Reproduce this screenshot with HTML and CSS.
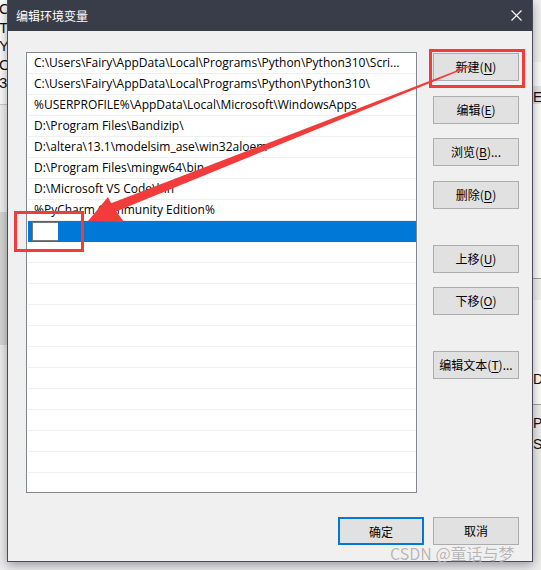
FILE: index.html
```html
<!DOCTYPE html>
<html lang="zh-CN">
<head>
<meta charset="utf-8">
<title>编辑环境变量</title>
<link rel="stylesheet" href="styles.css">
</head>
<body>
<div class="desk">
  <div class="side side-left">
    <div class="side-text">C:<br>TE<br>YE<br>O<br>3</div>
  </div>
  <div class="dialog">
    <div class="titlebar">
      <span class="title">编辑环境变量</span>
      <svg class="close" width="11" height="11" viewBox="0 0 11 11"><path d="M0.5 0.5L10.5 10.5M10.5 0.5L0.5 10.5" stroke="#fff" stroke-width="1.1" fill="none"/></svg>
    </div>
    <div class="content">
      <div class="main">
        <div class="list">
          <div class="row">C:\Users\Fairy\AppData\Local\Programs\Python\Python310\Scri...</div>
          <div class="row">C:\Users\Fairy\AppData\Local\Programs\Python\Python310\</div>
          <div class="row">%USERPROFILE%\AppData\Local\Microsoft\WindowsApps</div>
          <div class="row">D:\Program Files\Bandizip\</div>
          <div class="row">D:\altera\13.1\modelsim_ase\win32aloem</div>
          <div class="row">D:\Program Files\mingw64\bin</div>
          <div class="row">D:\Microsoft VS Code\bin</div>
          <div class="row">%PyCharm Community Edition%</div>
          <div class="row row-selected"><span class="editbox"></span></div>
          <div class="row"></div>
          <div class="row"></div>
          <div class="row"></div>
          <div class="row"></div>
          <div class="row"></div>
          <div class="row"></div>
          <div class="row"></div>
          <div class="row"></div>
          <div class="row"></div>
          <div class="row"></div>
          <div class="row"></div>
          <div class="row"></div>
        </div>
        <div class="actions">
          <button class="btn">新建(<u>N</u>)</button>
          <button class="btn gap-15">编辑(<u>E</u>)</button>
          <button class="btn gap-14">浏览(<u>B</u>)...</button>
          <button class="btn gap-15">删除(<u>D</u>)</button>
          <button class="btn gap-36">上移(<u>U</u>)</button>
          <button class="btn gap-14">下移(<u>O</u>)</button>
          <button class="btn gap-36">编辑文本(<u>T</u>)...</button>
        </div>
      </div>
      <div class="footer">
        <button class="btn btn-default">确定</button>
        <button class="btn">取消</button>
      </div>
    </div>
  </div>
  <div class="side side-right">
    <div class="right-text"><span class="r1">Ec</span><span class="r2">D</span><span class="r3">P</span><span class="r4">S</span></div>
  </div>
</div>
<svg class="annot" width="541" height="570" viewBox="0 0 541 570">
  <rect x="430.5" y="50.5" width="93" height="36" fill="none" stroke="#f23b3b" stroke-width="3"/>
  <rect x="15.5" y="212.5" width="67" height="38" fill="none" stroke="#f23b3b" stroke-width="3"/>
  <polygon points="470.3,66.6 469.7,65.4 110.5,203.6 113.5,212.4" fill="#f23b3b"/>
  <polygon points="88,221 108,197 113,207 124,222" fill="#f23b3b"/>
</svg>
<div class="watermark">CSDN @童话与梦</div>
</body>
</html>
```
FILE: styles.css
```css
html, body {
  margin: 0;
  padding: 0;
}
body {
  width: 541px;
  height: 570px;
  overflow: hidden;
  position: relative;
  font-family: "Open Sans", "Noto Sans CJK SC", sans-serif;
}
.desk {
  display: flex;
  height: 570px;
  background: #ebebeb;
}
.side {
  overflow: hidden;
  flex: none;
}
.side-left {
  width: 7px;
  background: linear-gradient(#fbfbfb 0 104px, #c9c9c9 104px 105px, #f0f0f0 105px 212px, #d6d6d6 212px 345px, #ececec 345px);
}
.side-text {
  font-family: "Liberation Sans", sans-serif;
  font-size: 15px;
  line-height: 18.5px;
  color: #111;
  margin-left: -1px;
  padding-top: 0;
  white-space: nowrap;
}
.side-right {
  width: 8px;
  background: linear-gradient(#f0f0f0 0 62px, #fafafa 62px 86px, #e3e3e3 86px 104px, #fbfbfb 104px 278px, #a0a0a0 278px 279px, #f0f0f0 279px 300px, #fbfbfb 300px 404px, #a0a0a0 404px 405px, #ececec 405px);
}
.right-text {
  display: flex;
  flex-direction: column;
  padding-top: 88px;
  font-family: "Liberation Sans", sans-serif;
  font-size: 14px;
  line-height: 18px;
  color: #111;
  white-space: nowrap;
}
.r2 { margin-top: 264px; }
.r3 { margin-top: 26px; }
.r4 { margin-top: 3px; }
.dialog {
  width: 526px;
  height: 562px;
  flex: none;
  box-sizing: border-box;
  border: 1px solid #4a4a58;
  border-top: none;
  background: #f0f0f0;
  box-shadow: 0 3px 10px rgba(0, 0, 0, 0.35);
  display: flex;
  flex-direction: column;
  position: relative;
  z-index: 1;
}
.titlebar {
  height: 31px;
  flex: none;
  background: #393c49;
  display: flex;
  align-items: center;
  justify-content: space-between;
  padding: 0 10px 0 8px;
  color: #fff;
  font-family: "Noto Sans CJK SC", sans-serif;
  font-size: 12px;
}
.close {
  display: block;
}
.content {
  padding: 21px 13px 0 18px;
}
.main {
  display: flex;
  gap: 16px;
}
.list {
  width: 391px;
  height: 441px;
  box-sizing: border-box;
  border: 1px solid #828790;
  background: #fff;
  overflow: hidden;
}
.row {
  height: 20px;
  line-height: 20px;
  border-bottom: 1px solid #efefef;
  margin-left: 1px;
  padding-left: 6px;
  font-size: 12px;
  color: #000;
  white-space: nowrap;
  overflow: hidden;
}
.row-selected {
  background: #0078d7;
  padding-left: 4px;
  display: flex;
  align-items: flex-end;
  border-bottom-color: #0078d7;
}
.editbox {
  display: block;
  width: 26px;
  height: 19px;
  box-sizing: border-box;
  border: 1px solid #7a7a7a;
  border-right: none;
  background: #fff;
}
.actions {
  width: 86px;
  display: flex;
  flex-direction: column;
  padding-top: 1px;
}
.btn {
  width: 86px;
  height: 28px;
  box-sizing: border-box;
  border: 1px solid #adadad;
  background: #e1e1e1;
  color: #000;
  font-family: "Noto Sans CJK SC", sans-serif;
  font-size: 12px;
  padding: 0;
  margin: 0;
  line-height: 26px;
  flex: none;
}
.btn u {
  text-underline-offset: 2px;
}
.gap-14 { margin-top: 14px; }
.gap-15 { margin-top: 15px; }
.gap-36 { margin-top: 36px; }
.btn-default {
  border: 2px solid #0078d7;
}
.footer {
  display: flex;
  justify-content: flex-end;
  gap: 9px;
  margin-top: 24px;
}
.annot {
  position: absolute;
  left: 0;
  top: 0;
  z-index: 5;
  pointer-events: none;
}
.watermark {
  position: absolute;
  left: 390px;
  top: 541px;
  z-index: 6;
  font-family: "Noto Sans CJK SC", sans-serif;
  font-size: 16px;
  color: rgba(150, 150, 150, 0.7);
  text-shadow: 0 0 1px #fff;
  white-space: nowrap;
}
```
